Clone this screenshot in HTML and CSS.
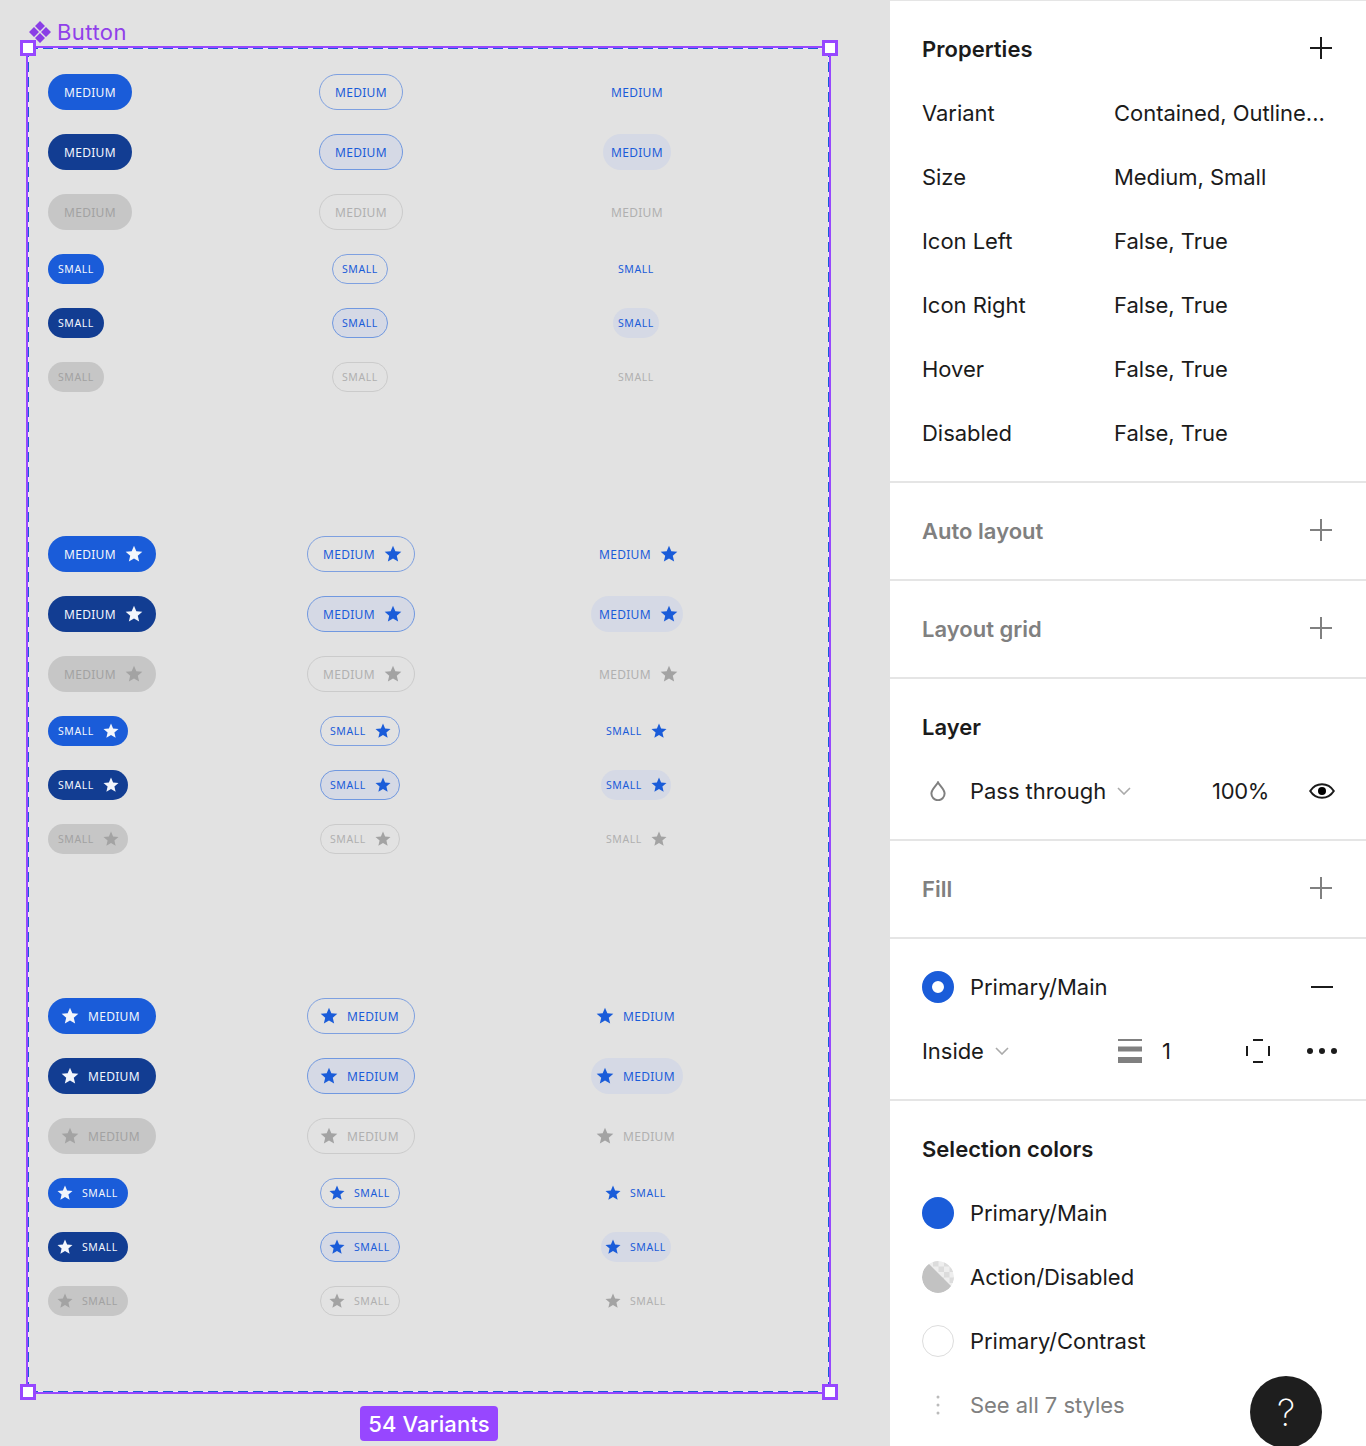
FILE: index.html
```html
<!DOCTYPE html>
<html lang="en">
<head>
<meta charset="utf-8">
<title>Button component</title>
<link rel="stylesheet" href="styles.css">
</head>
<body>
<svg class="defs" width="0" height="0" aria-hidden="true"><defs><symbol id="star" viewBox="0 0 24 24"><path d="M12 17.27 18.18 21l-1.64-7.03L22 9.24l-7.19-.61L12 2 9.19 8.63 2 9.24l5.46 4.73L5.82 21z"/></symbol></defs></svg>
<div class="app">
<main class="canvas">
<div class="frame">
<div class="frame-label">
<svg class="diamond" viewBox="0 0 22 22"><path d="M11 0l5 5-5 5-5-5zM5 6l5 5-5 5-5-5zM17 6l5 5-5 5-5-5zM11 12l5 5-5 5-5-5z"/></svg>
<span>Button</span>
</div>
<i class="handle tl"></i><i class="handle tr"></i><i class="handle bl"></i><i class="handle br"></i>
<div class="badge">54 Variants</div>

<section class="group">
<a class="btn med contained"><span class="t">MEDIUM</span></a>
<a class="btn med outlined"><span class="t">MEDIUM</span></a>
<a class="btn med text"><span class="t">MEDIUM</span></a>
<a class="btn med contained hover"><span class="t">MEDIUM</span></a>
<a class="btn med outlined hover"><span class="t">MEDIUM</span></a>
<a class="btn med text hover"><span class="t">MEDIUM</span></a>
<a class="btn med contained off"><span class="t">MEDIUM</span></a>
<a class="btn med outlined off"><span class="t">MEDIUM</span></a>
<a class="btn med text off"><span class="t">MEDIUM</span></a>
<a class="btn sm contained"><span class="t">SMALL</span></a>
<a class="btn sm outlined"><span class="t">SMALL</span></a>
<a class="btn sm text"><span class="t">SMALL</span></a>
<a class="btn sm contained hover"><span class="t">SMALL</span></a>
<a class="btn sm outlined hover"><span class="t">SMALL</span></a>
<a class="btn sm text hover"><span class="t">SMALL</span></a>
<a class="btn sm contained off"><span class="t">SMALL</span></a>
<a class="btn sm outlined off"><span class="t">SMALL</span></a>
<a class="btn sm text off"><span class="t">SMALL</span></a>
</section>

<section class="group">
<a class="btn med contained end"><span class="t">MEDIUM</span><svg class="star"><use href="#star"/></svg></a>
<a class="btn med outlined end"><span class="t">MEDIUM</span><svg class="star"><use href="#star"/></svg></a>
<a class="btn med text end"><span class="t">MEDIUM</span><svg class="star"><use href="#star"/></svg></a>
<a class="btn med contained hover end"><span class="t">MEDIUM</span><svg class="star"><use href="#star"/></svg></a>
<a class="btn med outlined hover end"><span class="t">MEDIUM</span><svg class="star"><use href="#star"/></svg></a>
<a class="btn med text hover end"><span class="t">MEDIUM</span><svg class="star"><use href="#star"/></svg></a>
<a class="btn med contained off end"><span class="t">MEDIUM</span><svg class="star"><use href="#star"/></svg></a>
<a class="btn med outlined off end"><span class="t">MEDIUM</span><svg class="star"><use href="#star"/></svg></a>
<a class="btn med text off end"><span class="t">MEDIUM</span><svg class="star"><use href="#star"/></svg></a>
<a class="btn sm contained end"><span class="t">SMALL</span><svg class="star"><use href="#star"/></svg></a>
<a class="btn sm outlined end"><span class="t">SMALL</span><svg class="star"><use href="#star"/></svg></a>
<a class="btn sm text end"><span class="t">SMALL</span><svg class="star"><use href="#star"/></svg></a>
<a class="btn sm contained hover end"><span class="t">SMALL</span><svg class="star"><use href="#star"/></svg></a>
<a class="btn sm outlined hover end"><span class="t">SMALL</span><svg class="star"><use href="#star"/></svg></a>
<a class="btn sm text hover end"><span class="t">SMALL</span><svg class="star"><use href="#star"/></svg></a>
<a class="btn sm contained off end"><span class="t">SMALL</span><svg class="star"><use href="#star"/></svg></a>
<a class="btn sm outlined off end"><span class="t">SMALL</span><svg class="star"><use href="#star"/></svg></a>
<a class="btn sm text off end"><span class="t">SMALL</span><svg class="star"><use href="#star"/></svg></a>
</section>

<section class="group">
<a class="btn med contained start"><svg class="star"><use href="#star"/></svg><span class="t">MEDIUM</span></a>
<a class="btn med outlined start"><svg class="star"><use href="#star"/></svg><span class="t">MEDIUM</span></a>
<a class="btn med text start"><svg class="star"><use href="#star"/></svg><span class="t">MEDIUM</span></a>
<a class="btn med contained hover start"><svg class="star"><use href="#star"/></svg><span class="t">MEDIUM</span></a>
<a class="btn med outlined hover start"><svg class="star"><use href="#star"/></svg><span class="t">MEDIUM</span></a>
<a class="btn med text hover start"><svg class="star"><use href="#star"/></svg><span class="t">MEDIUM</span></a>
<a class="btn med contained off start"><svg class="star"><use href="#star"/></svg><span class="t">MEDIUM</span></a>
<a class="btn med outlined off start"><svg class="star"><use href="#star"/></svg><span class="t">MEDIUM</span></a>
<a class="btn med text off start"><svg class="star"><use href="#star"/></svg><span class="t">MEDIUM</span></a>
<a class="btn sm contained start"><svg class="star"><use href="#star"/></svg><span class="t">SMALL</span></a>
<a class="btn sm outlined start"><svg class="star"><use href="#star"/></svg><span class="t">SMALL</span></a>
<a class="btn sm text start"><svg class="star"><use href="#star"/></svg><span class="t">SMALL</span></a>
<a class="btn sm contained hover start"><svg class="star"><use href="#star"/></svg><span class="t">SMALL</span></a>
<a class="btn sm outlined hover start"><svg class="star"><use href="#star"/></svg><span class="t">SMALL</span></a>
<a class="btn sm text hover start"><svg class="star"><use href="#star"/></svg><span class="t">SMALL</span></a>
<a class="btn sm contained off start"><svg class="star"><use href="#star"/></svg><span class="t">SMALL</span></a>
<a class="btn sm outlined off start"><svg class="star"><use href="#star"/></svg><span class="t">SMALL</span></a>
<a class="btn sm text off start"><svg class="star"><use href="#star"/></svg><span class="t">SMALL</span></a>
</section>
</div>
</main>

<aside class="panel">
<section class="sec">
<div class="head"><h2>Properties</h2><svg class="plus" viewBox="0 0 22 22"><path d="M0 11h22M11 0v22"/></svg></div>
<div class="prop"><span>Variant</span><span>Contained, Outline...</span></div>
<div class="prop"><span>Size</span><span>Medium, Small</span></div>
<div class="prop"><span>Icon Left</span><span>False, True</span></div>
<div class="prop"><span>Icon Right</span><span>False, True</span></div>
<div class="prop"><span>Hover</span><span>False, True</span></div>
<div class="prop"><span>Disabled</span><span>False, True</span></div>
</section>
<section class="sec muted">
<div class="head"><h2>Auto layout</h2><svg class="plus" viewBox="0 0 22 22"><path d="M0 11h22M11 0v22"/></svg></div>
</section>
<section class="sec muted">
<div class="head"><h2>Layout grid</h2><svg class="plus" viewBox="0 0 22 22"><path d="M0 11h22M11 0v22"/></svg></div>
</section>
<section class="sec">
<div class="head"><h2>Layer</h2></div>
<div class="layer-row">
<svg class="drop" viewBox="0 0 16 20"><path d="M8 1.4C6.6 4.4 1.4 8.400 1.400 12.600a6.600 6.600 0 0 0 13.200 0C14.600 8.400 9.400 4.400 8 1.400z"/></svg>
<span class="with-chev">Pass through<svg class="chev" viewBox="0 0 14 8"><path d="M1 1l6 6 6-6"/></svg></span>
<span class="pct">100%</span>
<svg class="eye" viewBox="0 0 26 16"><path class="eye-line" d="M1.200 8C4 3.600 8.200 1.200 13 1.200S22 3.600 24.800 8C22 12.400 17.800 14.800 13 14.800S4 12.400 1.200 8z"/><circle cx="13" cy="8" r="4"/></svg>
</div>
</section>
<section class="sec muted">
<div class="head"><h2>Fill</h2><svg class="plus" viewBox="0 0 22 22"><path d="M0 11h22M11 0v22"/></svg></div>
</section>
<section class="sec">
<div class="head"><div class="style-name"><i class="swatch ring"></i><span>Primary/Main</span></div><svg class="minus" viewBox="0 0 22 2"><path d="M0 1h22"/></svg></div>
<div class="stroke-row">
<span class="with-chev">Inside<svg class="chev" viewBox="0 0 14 8"><path d="M1 1l6 6 6-6"/></svg></span>
<svg class="bars" viewBox="0 0 24 24"><path d="M0 0h24v2H0zM0 7.500h24v5H0zM0 18h24v6H0z"/></svg>
<span>1</span>
<svg class="bracket" viewBox="0 0 24 24"><path d="M7 0h10v2H7zM7 22h10v2H7zM0 7h2v10H0zM22 7h2v10h-2z"/></svg>
<svg class="dots" viewBox="0 0 30 6"><circle cx="3" cy="3" r="3"/><circle cx="15" cy="3" r="3"/><circle cx="27" cy="3" r="3"/></svg>
</div>
</section>
<section class="sec last">
<div class="head"><h2>Selection colors</h2></div>
<div class="style-row"><i class="swatch solid"></i><span>Primary/Main</span></div>
<div class="style-row">
<svg class="swatch" viewBox="0 0 32 32"><defs><clipPath id="disc"><circle cx="16" cy="16" r="16"/></clipPath></defs><g clip-path="url(#disc)"><rect width="32" height="32" fill="#eeeeee"/><path d="M11 0h5.500v5.500H11zM22 0h5.500v5.500H22zM16.500 5.500H22V11h-5.500zM27.500 5.500H33V11h-5.500zM22 11h5.500v5.500H22zM16.500 16.500H22V22h-5.500zM27.500 16.500H33V22h-5.500z" fill="#dcdcdc"/><path d="M0 0h4l28 28v4H0z" fill="#c2c2c2"/></g></svg>
<span>Action/Disabled</span>
</div>
<div class="style-row"><i class="swatch blank"></i><span>Primary/Contrast</span></div>
<div class="style-row see">
<svg class="kebab" viewBox="0 0 4 20"><circle cx="2" cy="2" r="1.500"/><circle cx="2" cy="10" r="1.500"/><circle cx="2" cy="18" r="1.500"/></svg>
<span>See all 7 styles</span>
</div>
</section>
<div class="help">?</div>
</aside>
</div>
</body>
</html>
```

FILE: styles.css
```css
* { box-sizing: border-box; }
html, body { margin: 0; height: 1446px; overflow: hidden; }
body { font-family: Inter, "Liberation Sans", sans-serif; color: #1b1b1b; background: #e2e2e2; }
.defs { position: absolute; }
.app { display: flex; height: 1446px; }

/* Canvas */
.canvas { width: 890px; flex: none; padding: 48px 0 0 28px; background: #e2e2e2; }
.frame {
  position: relative;
  width: 801px;
  height: 1344px;
  padding: 26px 0 0 20px;
  display: flex;
  flex-direction: column;
  gap: 144px;
  outline: 2px solid #9747ff;
  background:
    repeating-linear-gradient(90deg, #1a5cd9 0 10px, #efe8fa 10px 15px) left top / 100% 1px no-repeat,
    repeating-linear-gradient(90deg, #1a5cd9 0 10px, #efe8fa 10px 15px) left bottom / 100% 1px no-repeat,
    repeating-linear-gradient(0deg, #1a5cd9 0 10px, #efe8fa 10px 15px) left top / 1px 100% no-repeat,
    repeating-linear-gradient(0deg, #1a5cd9 0 10px, #efe8fa 10px 15px) right top / 1px 100% no-repeat;
}
.frame-label {
  position: absolute;
  left: 1px;
  top: -28px;
  display: flex;
  align-items: center;
  gap: 6px;
  color: #9040ea;
  font-size: 22px;
  line-height: 24px;
  letter-spacing: 0.45px;
}
.diamond { width: 22px; height: 22px; fill: #8a3ee6; }
.handle { position: absolute; width: 16px; height: 16px; background: #fff; border: 3px solid #9747ff; z-index: 2; }
.tl { left: -8px; top: -8px; }
.tr { right: -9px; top: -8px; }
.bl { left: -8px; bottom: -8px; }
.br { right: -9px; bottom: -8px; }
.badge {
  position: absolute;
  left: 332px;
  top: 1358px;
  height: 35px;
  width: 138px;
  display: flex;
  align-items: center;
  justify-content: center;
  background: #9747ff;
  border-radius: 4px;
  color: #fff;
  font-size: 22px;
  font-weight: 500;
  letter-spacing: 0.15px;
}

/* Button grid */
.group { display: grid; grid-template-columns: 172px 282px 270px; row-gap: 24px; justify-items: center; }
.btn {
  display: flex;
  align-items: center;
  border-radius: 100px;
  font-family: "Noto Sans", sans-serif;
  white-space: nowrap;
}
.group > .btn:nth-child(3n+1) { justify-self: start; }
.med { height: 36px; font-size: 12px; letter-spacing: 0.3px; }
.sm { height: 30px; font-size: 10.500px; letter-spacing: 0.55px; margin-right: 2px; }
.group > .sm:nth-child(3n+1) { margin-right: 0; }
.t { display: block; text-align: left; }
.med .t { width: 52px; }
.sm .t { width: 36px; margin-bottom: 1px; }
.star { display: block; flex: none; fill: currentColor; }
.med .star { width: 20px; height: 20px; }
.sm .star { width: 18px; height: 18px; }

.med.contained { padding: 0 16px; }
.med.outlined { padding: 0 15px; }
.sm.contained { padding: 0 10px; }
.sm.outlined { padding: 0 9px; }
.med.text { padding: 0 8px; }
.sm.text { padding: 0 5px; }
.end, .start { gap: 8px; }
.med.contained.end { padding: 0 12px 0 16px; }
.med.contained.start { padding: 0 16px 0 12px; }
.med.outlined.end { padding: 0 11px 0 15px; }
.med.outlined.start { padding: 0 15px 0 11px; }
.sm.contained.end { padding: 0 8px 0 10px; }
.sm.contained.start { padding: 0 10px 0 8px; }
.sm.outlined.end { padding: 0 7px 0 9px; }
.sm.outlined.start { padding: 0 9px 0 7px; }
.med.text.end { padding: 0 4px 0 8px; }
.med.text.start { padding: 0 8px 0 4px; }
.sm.text.end { padding: 0 3px 0 5px; }
.sm.text.start { padding: 0 5px 0 3px; }

.contained { background: #1a5cd9; color: #f3f6fc; }
.contained.hover { background: #123d92; color: #f3f6fc; }
.contained.off { background: #c6c6c6; color: #a2a2a2; }
.outlined { border: 1px solid #7ea0e0; color: #1a5cd9; }
.outlined.hover { background: #d5d9e5; border-color: #7098e0; }
.outlined.off { border-color: #cbcbcb; color: #b0b0b0; }
.text { color: #1a5cd9; }
.text.hover { background: #d5d9e5; }
.text.off { color: #b0b0b0; }
.off .star { fill: #a3a3a3; }

/* Panel */
.panel {
  position: relative;
  width: 476px;
  flex: none;
  background: #fff;
  border-top: 1px solid #e5e5e5;
  font-size: 22px;
  letter-spacing: -0.04px;
}
.sec { padding: 16px 32px; border-bottom: 2px solid #e5e5e5; }
.sec.last { border-bottom: 0; }
.head, .prop, .layer-row, .stroke-row, .style-row { height: 64px; display: flex; align-items: center; }
.head { justify-content: space-between; }
h2 { margin: 0; font-size: 22px; font-weight: 600; letter-spacing: 0.02px; }
.muted h2 { color: #808080; }
.plus { width: 22px; height: 22px; margin: -2px 2px 0 0; fill: none; stroke: #1b1b1b; stroke-width: 2; }
.muted .plus { stroke: #808080; }
.prop > span:first-child { width: 192px; }
.layer-row { display: grid; grid-template-columns: 48px 242px 97px 1fr; }
.pct { letter-spacing: -0.3px; }
.drop { width: 16px; height: 20px; margin-left: 8px; fill: none; stroke: #808080; stroke-width: 2; }
.with-chev { display: flex; align-items: center; gap: 11px; }
.chev { width: 14px; height: 8px; fill: none; stroke: #aaaaaa; stroke-width: 1.600; }
.eye { width: 26px; height: 16px; }
.eye-line { fill: none; stroke: #1b1b1b; stroke-width: 2; }
.style-name { display: flex; align-items: center; gap: 16px; }
.minus { width: 22px; height: 2px; margin-right: 1px; fill: none; stroke: #1b1b1b; stroke-width: 2; }
.stroke-row { display: grid; grid-template-columns: 196px 44px 84px 61px 1fr; }
.bars { width: 24px; height: 24px; fill: #808080; }
.bracket { width: 24px; height: 24px; fill: #1b1b1b; }
.dots { width: 30px; height: 6px; fill: #1b1b1b; }
.style-row { gap: 16px; }
.swatch { display: block; width: 32px; height: 32px; border-radius: 50%; flex: none; }
.solid { background: #1a5cd9; }
.ring { border: 10px solid #1a5cd9; background: #fff; }
.blank { border: 1px solid #dddddd; background: #fff; }
.see { color: #808080; }
.kebab { width: 32px; height: 20px; fill: #bbbbbb; }
.help {
  position: absolute;
  left: 360px;
  top: 1375px;
  width: 72px;
  height: 72px;
  border-radius: 50%;
  background: #1e1e1e;
  color: #fff;
  font-size: 37px;
  font-weight: 200;
  display: flex;
  align-items: center;
  justify-content: center;
}
```
